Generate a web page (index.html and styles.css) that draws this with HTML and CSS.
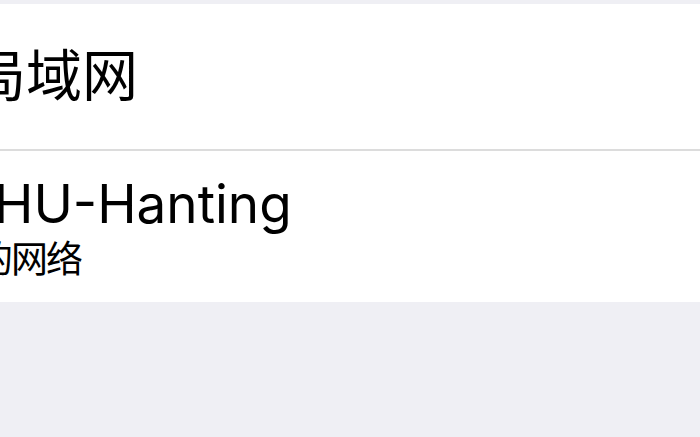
FILE: index.html
```html
<!DOCTYPE html>
<html lang="zh">
<head>
<meta charset="utf-8">
<link rel="stylesheet" href="styles.css">
</head>
<body>
<div class="page">
  <div class="list">
    <div class="row row-single">
      <span class="title title-lan">局域网</span>
    </div>
    <div class="sep"></div>
    <div class="row row-double">
      <span class="title title-net">HU-Hanting</span>
      <span class="sub">的网络</span>
    </div>
  </div>
</div>
</body>
</html>
```
FILE: styles.css
```css
html, body {
  margin: 0;
  padding: 0;
  background: #efeff4;
  overflow: hidden;
}
.page {
  width: 700px;
  height: 437px;
  padding-top: 4px;
  box-sizing: border-box;
  font-family: "Inter", "Noto Sans CJK SC", sans-serif;
  color: #000;
}
.list {
  background: #fff;
  display: flex;
  flex-direction: column;
}
.row {
  display: flex;
  flex-direction: column;
  justify-content: center;
  white-space: nowrap;
}
.row-single {
  height: 145px;
}
.row-double {
  height: 151px;
  padding-top: 2px;
  box-sizing: border-box;
}
.sep {
  height: 2px;
  background: #dcdcdc;
}
.title {
  font-size: 56px;
  line-height: 1.2;
}
.title-lan {
  margin-left: -30px;
}
.title-net {
  font-size: 53px;
  margin-left: -6px;
}
.sub {
  font-size: 37px;
  letter-spacing: -2px;
  line-height: 1.2;
  margin-left: -24px;
  margin-top: 1px;
}
```
